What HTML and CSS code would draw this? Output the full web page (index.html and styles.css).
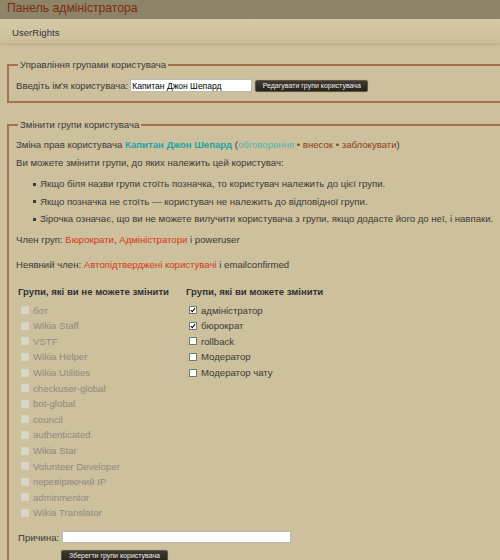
FILE: index.html
```html
<!DOCTYPE html>
<html lang="uk">
<head>
<meta charset="utf-8">
<link rel="stylesheet" href="styles.css">
</head>
<body>
<div class="topbar">Панель адміністратора</div>
<div class="subbar">UserRights</div>
<div class="content">
  <fieldset class="fs fs1">
    <legend>Управління групами користувача</legend>
    <div class="row">
      <label>Введіть ім'я користувача:</label>
      <input class="name" type="text" value="Капитан Джон Шепард">
      <button class="btn btn1">Редагувати групи користувача</button>
    </div>
  </fieldset>
  <fieldset class="fs fs2">
    <legend>Змінити групи користувача</legend>
    <p class="p1">Зміна прав користувача <a class="user">Капитан Джон Шепард</a> (<a class="talk">обговорення</a> <span class="sep">•</span> <a class="brown">внесок</a> <span class="sep">•</span> <a class="brown">заблокувати</a>)</p>
    <p class="p2">Ви можете змінити групи, до яких належить цей користувач:</p>
    <ul class="bul">
      <li>Якщо біля назви групи стоїть позначка, то користувач належить до цієї групи.</li>
      <li>Якщо позначка не стоїть — користувач не належить до відповідної групи.</li>
      <li>Зірочка означає, що ви не можете вилучити користувача з групи, якщо додасте його до неї, і навпаки.</li>
    </ul>
    <p class="p3">Член груп: <a class="red">Бюрократи</a>, <a class="red">Адміністратори</a> і poweruser</p>
    <p class="p4">Неявний член: <a class="red">Автопідтверджені користувачі</a> і emailconfirmed</p>
    <div class="cols">
      <div class="col colL">
        <div class="head">Групи, які ви не можете змінити</div>
        <div class="cb dis"><span class="box"></span>бот</div>
        <div class="cb dis"><span class="box"></span>Wikia Staff</div>
        <div class="cb dis"><span class="box"></span>VSTF</div>
        <div class="cb dis"><span class="box"></span>Wikia Helper</div>
        <div class="cb dis"><span class="box"></span>Wikia Utilities</div>
        <div class="cb dis"><span class="box"></span>checkuser-global</div>
        <div class="cb dis"><span class="box"></span>bot-global</div>
        <div class="cb dis"><span class="box"></span>council</div>
        <div class="cb dis"><span class="box"></span>authenticated</div>
        <div class="cb dis"><span class="box"></span>Wikia Star</div>
        <div class="cb dis"><span class="box"></span>Volunteer Developer</div>
        <div class="cb dis"><span class="box"></span>перевіряючий IP</div>
        <div class="cb dis"><span class="box"></span>adminmentor</div>
        <div class="cb dis"><span class="box"></span>Wikia Translator</div>
      </div>
      <div class="col colR">
        <div class="head">Групи, які ви можете змінити</div>
        <div class="cb"><span class="box on"><svg viewBox="0 0 8 8" width="8" height="8"><path d="M1.2 4.2 L3.1 6.2 L6.8 1.6" fill="none" stroke="#111" stroke-width="1.5"/></svg></span>адміністратор</div>
        <div class="cb"><span class="box on"><svg viewBox="0 0 8 8" width="8" height="8"><path d="M1.2 4.2 L3.1 6.2 L6.8 1.6" fill="none" stroke="#111" stroke-width="1.5"/></svg></span>бюрократ</div>
        <div class="cb"><span class="box"></span>rollback</div>
        <div class="cb"><span class="box"></span>Модератор</div>
        <div class="cb"><span class="box"></span>Модератор чату</div>
      </div>
    </div>
    <div class="reason">
      <label>Причина:</label>
      <input class="rinput" type="text">
    </div>
    <div class="saverow"><button class="btn btn2">Зберегти групи користувача</button></div>
  </fieldset>
</div>
</body>
</html>
```
FILE: styles.css
```css
html, body {
  margin: 0;
  padding: 0;
  overflow: hidden;
}
body {
  width: 500px;
  height: 560px;
  background: #cdc09c;
  font-family: "Liberation Sans", Arial, sans-serif;
  font-size: 9.6px;
  color: #3b3a36;
}
.topbar {
  box-sizing: border-box;
  height: 19px;
  background: #8e8468;
  color: #7e2c10;
  font-size: 12.2px;
  line-height: 16px;
  padding-left: 7px;
}
.subbar {
  box-sizing: border-box;
  height: 25px;
  background: linear-gradient(#d4c8a5, #d0c3a0 70%, #c9bc98);
  border-bottom: 1px solid #c2b591;
  box-shadow: 0 1px 2px rgba(120, 100, 60, 0.2);
  padding: 8px 0 0 12px;
  line-height: 12px;
  color: #333;
}
.content {
  width: 540px;
  padding: 15px 0 0 7px;
}
.fs {
  margin: 0;
  border: 2px solid #a3734f;
  border-right: none;
  padding: 0 0 0 7px;
}
.fs legend {
  margin-left: 2px;
  padding: 0 2px;
  line-height: 12px;
  color: #3b3a36;
}
.fs1 {
  padding-bottom: 9px;
}
.fs1 .row {
  display: flex;
  align-items: center;
  padding-top: 8px;
}
.fs1 label {
  margin-right: 2px;
}
.name {
  box-sizing: border-box;
  width: 122px;
  height: 13px;
  border: 1px solid #b8b8b8;
  padding: 0 1px;
  margin: 0;
  font-family: "Liberation Sans", Arial, sans-serif;
  font-size: 8.5px;
  color: #000;
  background: #fff;
}
.btn {
  box-sizing: border-box;
  height: 12px;
  padding: 0;
  margin: 0;
  border: 1px solid #5f5646;
  border-radius: 2px;
  background: linear-gradient(#403a2f, #27221b);
  color: #eeeeee;
  font-family: "Liberation Sans", Arial, sans-serif;
  font-size: 7px;
  line-height: 10px;
  text-align: center;
  box-shadow: 0 0 1px rgba(0,0,0,0.3);
}
.btn1 {
  margin-left: 3px;
  width: 113px;
}
.btn2 {
  width: 107px;
  height: 12px;
}
.fs2 {
  margin-top: 16px;
  border-bottom: none;
  height: 500px;
}
p {
  margin: 0;
}
a {
  text-decoration: none;
}
.p1 { margin-top: 6px; line-height: 16px; }
.p2 { margin-top: 2px; line-height: 16px; }
.user { color: #1fa3a8; font-weight: bold; }
.talk { color: #4fb5b3; }
.brown { color: #8a3d16; }
.sep { color: #6a4a30; }
.red { color: #d8361b; }
.bul {
  margin: 4px 0 0 0;
  padding: 0 0 0 24px;
  list-style: none;
}
.bul li {
  position: relative;
  line-height: 17.5px;
}
.bul li::before {
  content: "";
  position: absolute;
  left: -7px;
  top: 7.5px;
  width: 3px;
  height: 3px;
  background: #3b3a36;
}
.p3 { margin-top: 4px; line-height: 16px; }
.p4 { margin-top: 9px; line-height: 16px; }
.cols {
  display: flex;
  margin-top: 12px;
  padding-left: 2px;
}
.colL { width: 168px; }
.head {
  font-weight: bold;
  line-height: 14px;
  margin-bottom: 3.9px;
  color: #333;
}
.cb {
  display: flex;
  align-items: center;
  height: 15.6px;
  padding-left: 3px;
}
.box {
  display: inline-flex;
  align-items: center;
  justify-content: center;
  box-sizing: border-box;
  width: 8px;
  height: 8px;
  border: 1px solid #767676;
  background: #fff;
  margin-right: 4px;
}
.dis {
  color: #8e8b80;
}
.dis .box {
  border-color: #d8d2c2;
  background: #dcd6c8;
}
.reason {
  display: flex;
  align-items: center;
  margin-top: 10.5px;
  padding-left: 2px;
}
.reason label { margin-right: 3px; }
.rinput {
  box-sizing: border-box;
  width: 229px;
  height: 12px;
  margin: 0;
  padding: 0;
  border: 1px solid #b8b8b8;
  background: #fff;
}
.saverow {
  padding-left: 45px;
  margin-top: 6px;
}
```
